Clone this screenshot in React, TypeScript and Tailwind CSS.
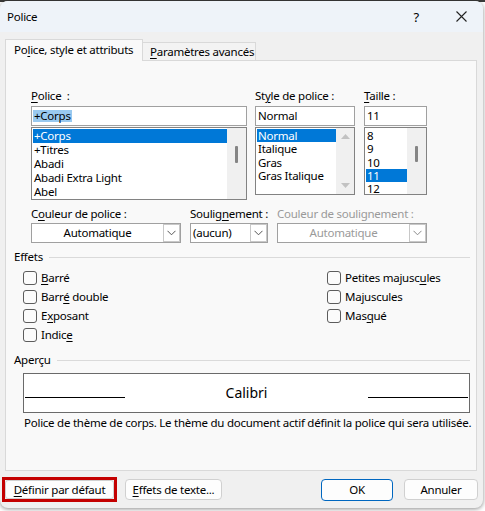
import React from "react";

const U = ({ children }: { children: React.ReactNode }) => (
  <span className="underline decoration-1 underline-offset-[2px]">{children}</span>
);

const Chevron = ({ color = "#555" }: { color?: string }) => (
  <svg width="9" height="6" viewBox="0 0 9 6">
    <polyline points="0.5,0.8 4.5,4.8 8.5,0.8" fill="none" stroke={color} strokeWidth="1" />
  </svg>
);

const Select = ({
  w,
  text,
  center,
  disabled,
}: {
  w: string;
  text: string;
  center?: boolean;
  disabled?: boolean;
}) => (
  <div className={`${w} h-[20px] border border-[#a0a0a0] bg-white flex items-stretch`}>
    <div
      className={`flex-1 flex items-center whitespace-nowrap ${center ? "justify-center" : "pl-[2px]"} ${
        disabled ? "text-[#9a9a9a]" : "text-black"
      }`}
    >
      {text}
    </div>
    <div className="w-[17px] border border-[#c8c8c8] flex items-center justify-center bg-white">
      <Chevron color={disabled ? "#8a8a8a" : "#555"} />
    </div>
  </div>
);

const Check = ({ children }: { children: React.ReactNode }) => (
  <div className="h-[19px] flex items-center whitespace-nowrap">
    <div className="w-[14px] h-[14px] rounded-[3px] border border-[#5c5c5c] bg-[#fbfbfb]" />
    <div className="ml-[4px]">{children}</div>
  </div>
);

const GroupHeader = ({ label }: { label: string }) => (
  <div className="flex items-center h-[16px] w-[456px]">
    <span>{label}</span>
    <div className="flex-1 h-px bg-[#dadada] ml-[6px]" />
  </div>
);

export default function App() {
  return (
    <div className="w-[485px] h-[511px] bg-white relative overflow-hidden text-[11.5px] tracking-[-0.25px] leading-[16px] text-black font-['Noto_Sans',sans-serif]">
      <div className="absolute top-0 left-0 w-[485px] h-[2px] bg-[#3a3a3a]" />
      <div className="relative mt-[1px] w-[483px] h-[507px] rounded-[8px] bg-[#f0f0f0] overflow-hidden shadow-[0_1px_4px_rgba(0,0,0,0.45)] flex flex-col">
        {/* Title bar */}
        <div className="h-[31px] bg-[#eef3f9] flex items-center pl-[7px] shrink-0">
          <span>Police</span>
          <div className="flex-1" />
          <span className="text-[13px] mr-[37px]">?</span>
          <svg width="11" height="11" viewBox="0 0 11 11" className="mr-[16px]">
            <path d="M0.5 0.5 L10.5 10.5 M10.5 0.5 L0.5 10.5" stroke="#222" strokeWidth="1.1" />
          </svg>
        </div>

        {/* Tabs + panel */}
        <div className="pl-[5px] pt-[7px] shrink-0">
          <div className="flex items-end h-[21px] whitespace-nowrap">
            <div className="relative z-10 h-[22px] -mb-[1px] w-[138px] bg-[#f9f9f9] border border-b-0 border-[#d9d9d9] flex items-center pl-[8px] pb-[2px]">
              <span>
                Po<U>l</U>ice, style et attributs
              </span>
            </div>
            <div className="h-[18px] w-[113px] bg-[#f3f3f3] border border-l-0 border-b-0 border-[#d9d9d9] flex items-center pl-[7px]">
              <span>
                <U>P</U>aramètres avancés
              </span>
            </div>
          </div>
          <div className="w-[472px] h-[411px] border border-[#d9d9d9] bg-[#f9f9f9] px-[8px] pt-[27px] whitespace-nowrap">
            {/* Row 1 */}
            <div className="flex pl-[17px] items-start">
              <div className="w-[216px]">
                <div className="h-[16px] mb-[2px]">
                  <U>P</U>olice&nbsp; :
                </div>
                <div className="h-[20px] border border-[#a0a0a0] bg-white flex items-center pl-[1px]">
                  <span className="bg-[#99c9ef] px-[1px] leading-[12px] h-[12px] flex items-center">+Corps</span>
                </div>
                <div className="mt-[1px] h-[73px] border border-[#828282] bg-white flex">
                  <div className="flex-1 pt-[1px] pl-[1px]">
                    <div className="h-[14px] leading-[14px] bg-[#0078d7] text-white pl-[1px]">+Corps</div>
                    <div className="h-[14px] leading-[14px] pl-[1px]">+Titres</div>
                    <div className="h-[14px] leading-[14px] pl-[1px]">Abadi</div>
                    <div className="h-[14px] leading-[14px] pl-[1px]">Abadi Extra Light</div>
                    <div className="h-[14px] leading-[14px] pl-[1px]">Abel</div>
                  </div>
                  <div className="w-[19px] bg-[#f0f0f0] flex justify-center pt-[18px]">
                    <div className="w-[3px] h-[17px] bg-[#858585] rounded-[1px]" />
                  </div>
                </div>
              </div>

              <div className="w-[100px] ml-[8px]">
                <div className="h-[16px] mb-[2px]">
                  St<U>y</U>le de police :
                </div>
                <div className="h-[20px] border border-[#a0a0a0] bg-white flex items-center pl-[2px]">Normal</div>
                <div className="mt-[1px] h-[68px] border border-[#828282] bg-white flex">
                  <div className="flex-1 pt-[1px] pl-[1px]">
                    <div className="h-[13.3px] leading-[13.3px] bg-[#0078d7] text-white pl-[1px]">Normal</div>
                    <div className="h-[13.3px] leading-[13.3px] pl-[1px]">Italique</div>
                    <div className="h-[13.3px] leading-[13.3px] pl-[1px]">Gras</div>
                    <div className="h-[13.3px] leading-[13.3px] pl-[1px]">Gras Italique</div>
                  </div>
                  <div className="w-[18px] bg-[#f0f0f0] flex flex-col items-center justify-between py-[6px]">
                    <svg width="9" height="5" viewBox="0 0 9 5">
                      <polygon points="0,5 9,5 4.5,0" fill="#c2c2c2" />
                    </svg>
                    <svg width="9" height="5" viewBox="0 0 9 5">
                      <polygon points="0,0 9,0 4.5,5" fill="#c2c2c2" />
                    </svg>
                  </div>
                </div>
              </div>

              <div className="w-[63px] ml-[9px]">
                <div className="h-[16px] mb-[2px]">
                  <U>T</U>aille :
                </div>
                <div className="h-[20px] border border-[#a0a0a0] bg-white flex items-center pl-[2px]">11</div>
                <div className="mt-[1px] h-[68px] border border-[#828282] bg-white flex">
                  <div className="flex-1 pt-[1px] pl-[1px]">
                    <div className="h-[13.3px] leading-[13.3px] pl-[1px]">8</div>
                    <div className="h-[13.3px] leading-[13.3px] pl-[1px]">9</div>
                    <div className="h-[13.3px] leading-[13.3px] pl-[1px]">10</div>
                    <div className="h-[13.3px] leading-[13.3px] bg-[#0078d7] text-white pl-[1px]">11</div>
                    <div className="h-[13.3px] leading-[13.3px] pl-[1px]">12</div>
                  </div>
                  <div className="w-[19px] bg-[#f0f0f0] flex justify-center pt-[18px]">
                    <div className="w-[3px] h-[16px] bg-[#858585] rounded-[1px]" />
                  </div>
                </div>
              </div>
            </div>

            {/* Row 2 */}
            <div className="flex pl-[17px] mt-[6px]">
              <div className="w-[150px]">
                <div className="h-[16px] mb-[1px]">
                  C<U>o</U>uleur de police :
                </div>
                <Select w="w-[150px]" text="Automatique" center />
              </div>
              <div className="w-[78px] ml-[9px]">
                <div className="h-[16px] mb-[1px]">
                  Soulig<U>n</U>ement :
                </div>
                <Select w="w-[78px]" text="(aucun)" />
              </div>
              <div className="w-[150px] ml-[9px]">
                <div className="h-[16px] mb-[1px] text-[#9a9a9a]">Couleur de soulignement :</div>
                <Select w="w-[150px]" text="Automatique" center disabled />
              </div>
            </div>

            {/* Effets */}
            <div className="mt-[6px]">
              <GroupHeader label="Effets" />
            </div>
            <div className="mt-[3px] pl-[9px] flex">
              <div className="w-[304px]">
                <Check>
                  <U>B</U>arré
                </Check>
                <Check>
                  Barr<U>é</U> double
                </Check>
                <Check>
                  E<U>x</U>posant
                </Check>
                <Check>
                  Indic<U>e</U>
                </Check>
              </div>
              <div>
                <Check>
                  Petites majusc<U>u</U>les
                </Check>
                <Check>
                  Ma<U>j</U>uscules
                </Check>
                <Check>
                  Mas<U>q</U>ué
                </Check>
              </div>
            </div>

            {/* Aperçu */}
            <div className="mt-[8px]">
              <GroupHeader label="Aperçu" />
            </div>
            <div className="mt-[5px] ml-[9px] w-[447px] h-[40px] border border-[#6a6a6a] bg-white flex items-center px-[1px]">
              <div className="w-[100px] h-px bg-black mt-[9px]" />
              <div className="flex-1 text-center text-[14px] tracking-normal leading-[18px] -mt-[1px]">Calibri</div>
              <div className="w-[100px] h-px bg-black mt-[9px]" />
            </div>
            <div className="mt-[2px] ml-[10px]">
              Police de thème de corps. Le thème du document actif définit la police qui sera utilisée.
            </div>
          </div>
        </div>

        {/* Buttons */}
        <div className="flex items-center mt-[5px] h-[27px] pl-[2px] whitespace-nowrap">
          <div className="border-[3px] border-[#c40000] w-[115px] h-[25px] flex">
            <div className="flex-1 rounded-[3px] border border-[#d0d0d0] bg-[#fdfdfd] flex items-center justify-center">
              <span>
                <U>D</U>éfinir par défaut
              </span>
            </div>
          </div>
          <div className="ml-[8px] w-[97px] h-[21px] rounded-[4px] border border-[#d0d0d0] bg-[#fdfdfd] flex items-center justify-center">
            <span>
              <U>E</U>ffets de texte...
            </span>
          </div>
          <div className="ml-[99px] w-[72px] h-[22px] rounded-[4px] border border-[#0067c0] bg-[#fdfdfd] flex items-center justify-center">
            OK
          </div>
          <div className="ml-[11px] w-[74px] h-[21px] rounded-[4px] border border-[#d0d0d0] bg-[#fdfdfd] flex items-center justify-center">
            Annuler
          </div>
        </div>
      </div>
    </div>
  );
}
